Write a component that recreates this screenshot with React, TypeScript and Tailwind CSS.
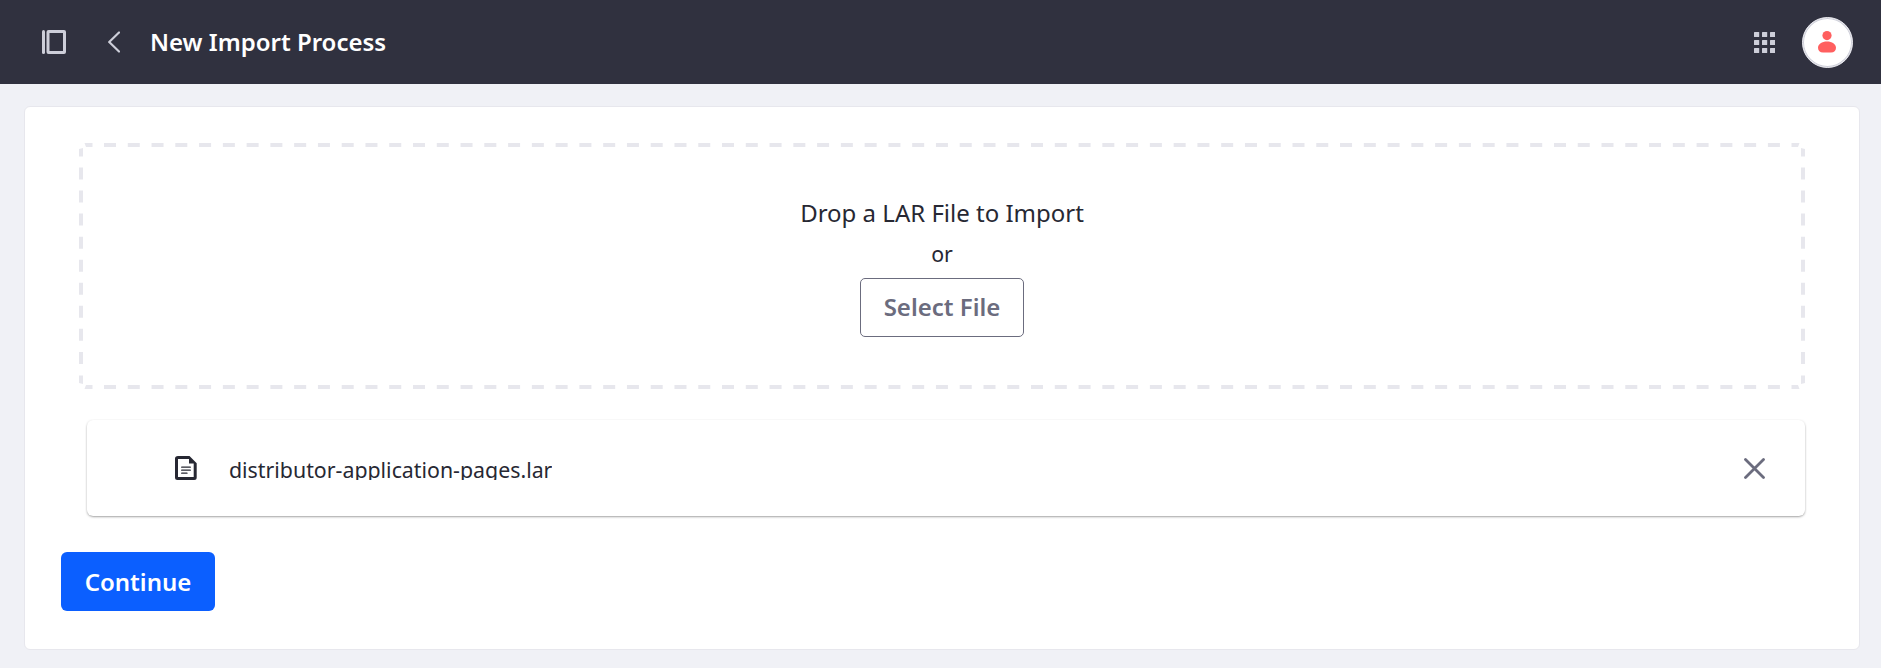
const font = "font-['Noto_Sans',sans-serif]";

function DashedFrame() {
  return (
    <svg className="pointer-events-none absolute inset-0" width="1726" height="246" viewBox="0 0 1726 246" fill="none" stroke="#e7e7ed" strokeWidth="4">
      <path d="M25 2H1701M25 244H1701" strokeDasharray="12 11.77" />
      <path d="M2 24.5V222M1724 24.5V222" strokeDasharray="12 11.05" />
      <path
        stroke="none"
        fill="#e7e7ed"
        d="M5.5 0H13.5V4H7ZM0 6L4 5V13.5H0ZM1720.500 0H1712.500V4H1719ZM1726 6L1722 5V13.500H1726ZM5.500 246H13.500V242H7ZM0 240L4 241V232.500H0ZM1720.500 246H1712.500V242H1719ZM1726 240L1722 241V232.500H1726Z"
      />
    </svg>
  );
}

function Header() {
  return (
    <header className="flex h-[84px] items-center bg-[#30313f] pl-[42px] pr-7">
      <svg className="size-6 shrink-0" viewBox="0 0 24 24" fill="#cdced9">
        <rect x="0" y="0" width="3" height="24" rx="1.5" />
        <path fillRule="evenodd" d="M6.500 0h15.500a2 2 0 0 1 2 2v20a2 2 0 0 1-2 2H6.500a2 2 0 0 1-2-2V2a2 2 0 0 1 2-2ZM7.500 3v18h13.500V3Z" />
      </svg>
      <svg className="ml-[42px] h-6 w-3 shrink-0" viewBox="0 0 12 24" fill="none" stroke="#cdced9" strokeWidth="2.200" strokeLinecap="round" strokeLinejoin="round">
        <path d="M11 2.500L1.200 12L11 21.500" />
      </svg>
      <h1 className="ml-[30px] text-2xl font-semibold text-white">New Import Process</h1>
      <svg className="ml-auto h-[22px] w-[21px] shrink-0" viewBox="0 0 21 22" fill="#cdced9">
        {[1, 9, 17].map((y) =>
          [0, 8, 16].map((x) => <rect key={`${x}-${y}`} x={x} y={y} width="5.200" height="5" rx="0.5" />),
        )}
      </svg>
      <div className="ml-[27px] flex size-[51px] shrink-0 items-center justify-center rounded-full border border-[#e7e7ed] bg-white pr-px shadow-[inset_0_0_0_1px_#cdced9]">
        <svg width="18" height="22" viewBox="0 0 18 22" fill="#ff5f5f">
          <circle cx="9" cy="4.600" r="4.600" />
          <path d="M9 10.500c5 0 9 2.700 9 6.200 0 3-2 4.700-5 4.700H5c-3 0-5-1.700-5-4.700 0-3.500 4-6.200 9-6.200Z" />
        </svg>
      </div>
    </header>
  );
}

export default function App() {
  return (
    <div className={`flex h-screen flex-col overflow-hidden bg-[#f0f1f6] text-[#272833] ${font}`}>
      <Header />
      <main className="ml-6 mt-[22px] flex h-[544px] w-[1836px] flex-col rounded-md border border-[#e7e7ed] bg-white pl-9 pt-9">
        <section className="relative ml-[18px] flex h-[246px] w-[1726px] flex-col items-center pt-[52px]">
          <DashedFrame />
          <h2 className="text-2xl leading-9">Drop a LAR File to Import</h2>
          <p className="mt-[7px] text-[21.333px] leading-[32px]">or</p>
          <button className="mt-2 h-[59px] w-[164px] rounded-[5px] border border-[#6b6c7e] pb-[2px] text-2xl font-semibold text-[#6b6c7e]">
            Select File
          </button>
        </section>
        <section className="ml-[26px] mt-[31px] flex h-24 w-[1718px] shrink-0 items-center rounded-md bg-white pl-[88px] pr-10 shadow-[0_1px_3px_-1px_rgba(0,0,0,0.75)]">
          <svg className="size-6 shrink-0" viewBox="0 0 24 24" fill="none">
            <path d="M3 0H14.500L21.700 7.200V21.500Q21.700 24 19.200 24H2.500Q0 24 0 21.500V2.500Q0 0 3 0ZM3 3V21H18.700V7.500H14V3Z" fill="#272833" fillRule="evenodd" />
            <path d="M6.700 11.200H15.300M6.700 14.200H15.300M6.700 17.200H12" stroke="#272833" strokeWidth="1.300" strokeLinecap="round" />
          </svg>
          <span className="mb-[3px] ml-[30px] h-[26px] overflow-hidden text-[21.333px] leading-[32px]">distributor-application-pages.lar</span>
          <svg className="ml-auto size-[21px]" viewBox="0 0 21 21" stroke="#6b6c7e" strokeWidth="2.800" strokeLinecap="round">
            <path d="M1.500 1.500L19.500 19.500M19.500 1.500L1.500 19.500" />
          </svg>
        </section>
        <button className="mt-9 h-[59px] w-[154px] rounded-md bg-[#0b5fff] text-2xl font-semibold text-white">Continue</button>
      </main>
    </div>
  );
}
